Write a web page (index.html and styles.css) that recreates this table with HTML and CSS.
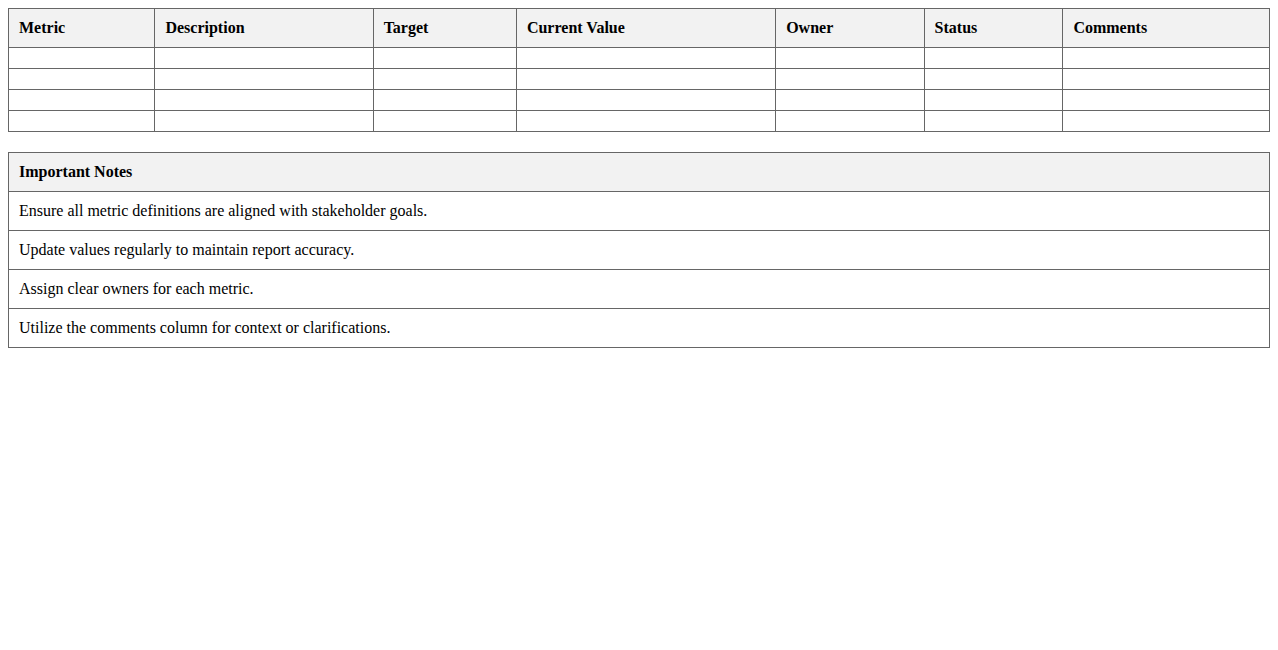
FILE: index.html
```html
<!DOCTYPE html>
<html>
<head>
<meta charset="utf-8">
<link rel="stylesheet" href="styles.css">
</head>
<body>
<table class="grid">
  <thead>
    <tr>
      <th>Metric</th>
      <th>Description</th>
      <th>Target</th>
      <th>Current Value</th>
      <th>Owner</th>
      <th>Status</th>
      <th>Comments</th>
    </tr>
  </thead>
  <tbody>
    <tr><td></td><td></td><td></td><td></td><td></td><td></td><td></td></tr>
    <tr><td></td><td></td><td></td><td></td><td></td><td></td><td></td></tr>
    <tr><td></td><td></td><td></td><td></td><td></td><td></td><td></td></tr>
    <tr><td></td><td></td><td></td><td></td><td></td><td></td><td></td></tr>
  </tbody>
</table>

<table class="grid notes">
  <thead>
    <tr><th>Important Notes</th></tr>
  </thead>
  <tbody>
    <tr><td>Ensure all metric definitions are aligned with stakeholder goals.</td></tr>
    <tr><td>Update values regularly to maintain report accuracy.</td></tr>
    <tr><td>Assign clear owners for each metric.</td></tr>
    <tr><td>Utilize the comments column for context or clarifications.</td></tr>
  </tbody>
</table>
</body>
</html>
```

FILE: styles.css
```css
body {
  margin: 8px;
  font-family: "Liberation Serif", "Times New Roman", serif;
  font-size: 16px;
  color: #000;
  background: #fff;
}

.grid {
  width: 100%;
  border-collapse: collapse;
}

.grid th,
.grid td {
  border: 1px solid #666;
  padding: 10px;
  text-align: left;
}

.grid th {
  background: #f2f2f2;
  font-weight: bold;
}

.notes {
  margin-top: 20px;
}
```
